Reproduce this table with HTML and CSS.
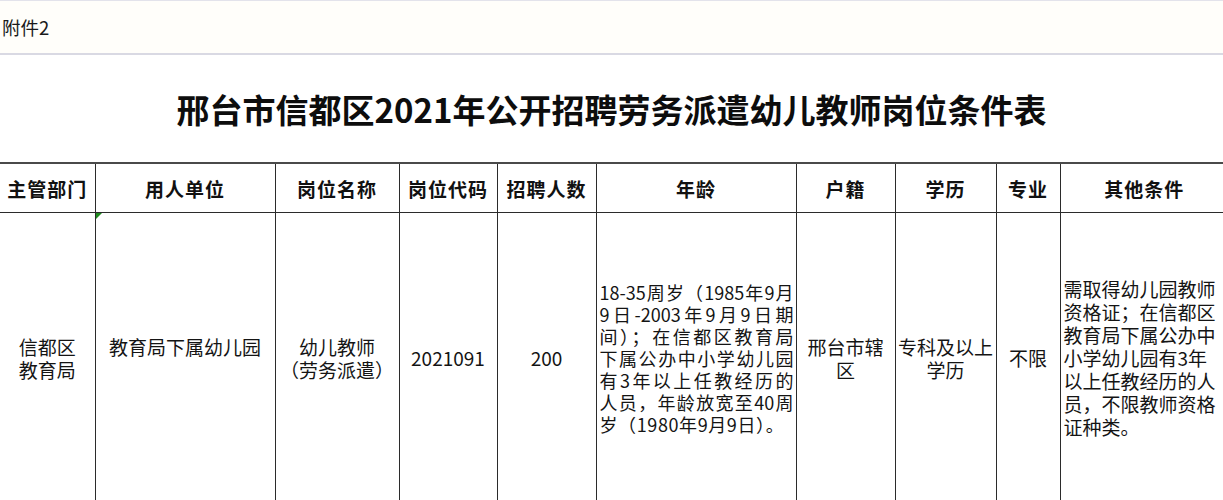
FILE: index.html
```html
<!DOCTYPE html>
<html lang="zh-CN">
<head>
<meta charset="utf-8">
<title>邢台市信都区2021年公开招聘劳务派遣幼儿教师岗位条件表</title>
<link rel="stylesheet" href="styles.css">
</head>
<body>
<div class="page">
  <div class="attach">附件2</div>
  <div class="title-row"><h1 class="title">邢台市信都区2021年公开招聘劳务派遣幼儿教师岗位条件表</h1></div>
  <table class="grid">
    <colgroup>
      <col class="c-dept"><col class="c-unit"><col class="c-name"><col class="c-code"><col class="c-num"><col class="c-age"><col class="c-huji"><col class="c-edu"><col class="c-major"><col class="c-other">
    </colgroup>
    <thead>
      <tr class="head">
        <th class="first">主管部门</th>
        <th>用人单位</th>
        <th>岗位名称</th>
        <th>岗位代码</th>
        <th>招聘人数</th>
        <th>年龄</th>
        <th>户籍</th>
        <th>学历</th>
        <th>专业</th>
        <th>其他条件</th>
      </tr>
    </thead>
    <tbody>
      <tr class="data">
        <td class="first">信都区<br>教育局</td>
        <td class="marked"><span class="flag"></span><span class="lift">教育局下属幼儿园</span></td>
        <td>幼儿教师<br>（劳务派遣）</td>
        <td>2021091</td>
        <td>200</td>
        <td class="left age">
          <span class="jl">18-35周岁（1985年9月</span>
          <span class="jl">9日-2003年9月9日期</span>
          <span class="jl">间）；在信都区教育局</span>
          <span class="jl">下属公办中小学幼儿园</span>
          <span class="jl">有3年以上任教经历的</span>
          <span class="jl">人员，年龄放宽至40周</span>
          <span class="al">岁（1980年9月9日）。</span>
        </td>
        <td>邢台市辖<br>区</td>
        <td>专科及以上<br>学历</td>
        <td>不限</td>
        <td class="left">
          <span class="ll">需取得幼儿园教师</span>
          <span class="ll">资格证；在信都区</span>
          <span class="ll">教育局下属公办中</span>
          <span class="ll">小学幼儿园有3年</span>
          <span class="ll">以上任教经历的人</span>
          <span class="ll">员，不限教师资格</span>
          <span class="ll">证种类。</span>
        </td>
      </tr>
    </tbody>
  </table>
</div>
</body>
</html>
```
FILE: styles.css
```css
html, body {
  margin: 0;
  padding: 0;
  background: #ffffff;
  overflow: hidden;
}

.page {
  width: 1223px;
  height: 500px;
  overflow: hidden;
  font-family: "Noto Sans CJK SC", "Liberation Sans", sans-serif;
  color: #111111;
}

.attach {
  height: 52px;
  border-top: 1px solid #e3e3eb;
  border-bottom: 2px solid #d9d9e3;
  background: #fffefa;
  display: flex;
  align-items: center;
  padding-left: 2px;
  font-size: 18.5px;
  color: #1a1a1a;
}

.title-row {
  height: 107px;
  display: flex;
  align-items: center;
  justify-content: center;
}

.title {
  margin: 0;
  font-size: 33px;
  font-weight: 700;
  color: #0d0d0d;
  letter-spacing: 0;
  white-space: nowrap;
}

.grid {
  width: 1228px;
  table-layout: fixed;
  border-collapse: collapse;
  border-top: 2px solid #4a4a4a;
}

.c-dept { width: 95px; }
.c-unit { width: 180px; }
.c-name { width: 124px; }
.c-code { width: 98px; }
.c-num { width: 99px; }
.c-age { width: 200px; }
.c-huji { width: 99px; }
.c-edu { width: 101px; }
.c-major { width: 64px; }
.c-other { width: 168px; }

.grid th,
.grid td {
  border-left: 1px solid #2b2b2b;
  border-bottom: 1px solid #2b2b2b;
  padding: 0;
  text-align: center;
  vertical-align: middle;
}

.grid .first {
  border-left: none;
}

.head th {
  height: 48px;
  font-size: 19px;
  font-weight: 700;
  letter-spacing: 1px;
  color: #111111;
}

.data td {
  height: 289px;
  font-size: 19px;
  line-height: 23px;
  font-weight: 400;
  color: #141414;
}

.data td.left {
  text-align: left;
  padding: 0 2px 0 3px;
}

.data td.age {
  font-size: 18px;
  line-height: 22px;
}

.jl {
  display: block;
  white-space: nowrap;
  text-align: justify;
  text-align-last: justify;
}

.al {
  display: block;
  white-space: nowrap;
  text-align: left;
  letter-spacing: 0.6px;
}

.ll {
  display: block;
  white-space: nowrap;
  text-align: left;
}

.marked {
  position: relative;
}

.flag {
  position: absolute;
  left: 0;
  top: 0;
  width: 0;
  height: 0;
  border-top: 6px solid #1e8a1e;
  border-right: 6px solid transparent;
}

.lift {
  display: block;
  padding-bottom: 22px;
}
```
